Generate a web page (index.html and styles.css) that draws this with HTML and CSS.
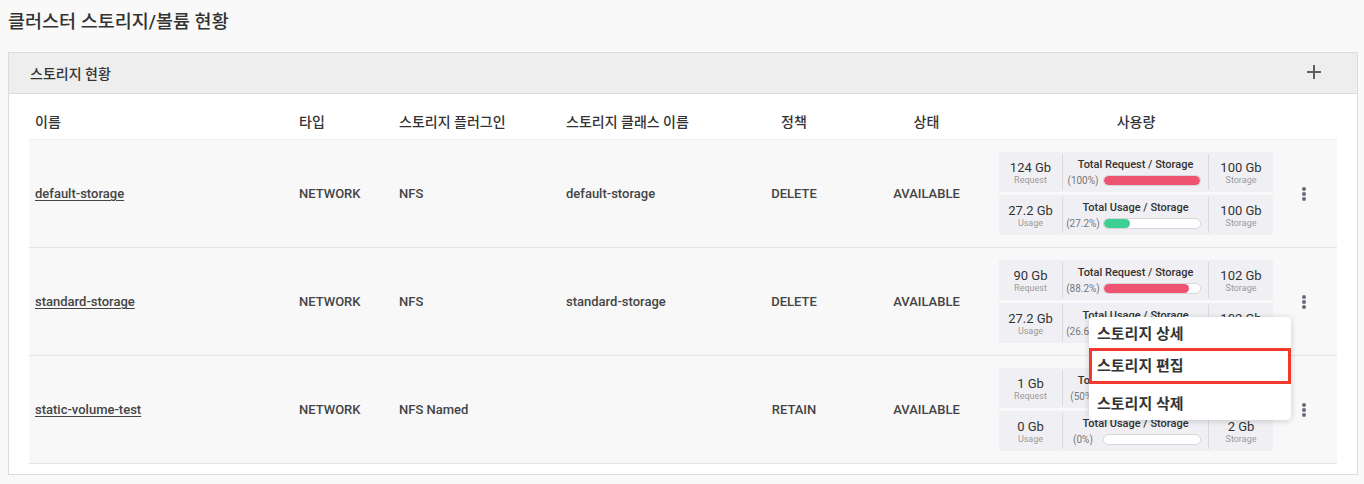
FILE: index.html
```html
<!DOCTYPE html>
<html lang="ko">
<head>
<meta charset="utf-8">
<link rel="stylesheet" href="styles.css">
</head>
<body>
<h1 class="page-title">클러스터 스토리지/볼륨 현황</h1>
<section class="panel">
  <div class="panel-head">
    <span class="panel-title">스토리지 현황</span>
    <svg class="plus" width="16" height="16" viewBox="0 0 16 16"><path d="M8 1v14M1 8h14" stroke="#606060" stroke-width="2" fill="none"/></svg>
  </div>
  <div class="panel-body">
    <div class="grid head">
      <div class="c">이름</div>
      <div class="c">타입</div>
      <div class="c">스토리지 플러그인</div>
      <div class="c">스토리지 클래스 이름</div>
      <div class="c center">정책</div>
      <div class="c center">상태</div>
      <div class="c center">사용량</div>
      <div class="c"></div>
    </div>

    <div class="grid row">
      <div class="c"><a class="name">default-storage</a></div>
      <div class="c">NETWORK</div>
      <div class="c">NFS</div>
      <div class="c">default-storage</div>
      <div class="c center">DELETE</div>
      <div class="c center">AVAILABLE</div>
      <div class="c usage">
        <div class="ublock">
          <div class="val"><span class="num">124 Gb</span><span class="lbl">Request</span></div>
          <div class="mid"><span class="mt">Total Request / Storage</span><div class="barrow"><span class="pct">(100%)</span><span class="bar"><span class="fill red" style="width:100%"></span></span></div></div>
          <div class="val"><span class="num">100 Gb</span><span class="lbl">Storage</span></div>
        </div>
        <div class="ublock">
          <div class="val"><span class="num">27.2 Gb</span><span class="lbl">Usage</span></div>
          <div class="mid"><span class="mt">Total Usage / Storage</span><div class="barrow"><span class="pct">(27.2%)</span><span class="bar"><span class="fill green" style="width:27.2%"></span></span></div></div>
          <div class="val"><span class="num">100 Gb</span><span class="lbl">Storage</span></div>
        </div>
      </div>
      <div class="c act"><svg class="kebab" width="6" height="16" viewBox="0 0 6 16"><circle cx="3" cy="3" r="2"/><circle cx="3" cy="8" r="2"/><circle cx="3" cy="13" r="2"/></svg></div>
    </div>

    <div class="grid row">
      <div class="c"><a class="name">standard-storage</a></div>
      <div class="c">NETWORK</div>
      <div class="c">NFS</div>
      <div class="c">standard-storage</div>
      <div class="c center">DELETE</div>
      <div class="c center">AVAILABLE</div>
      <div class="c usage">
        <div class="ublock">
          <div class="val"><span class="num">90 Gb</span><span class="lbl">Request</span></div>
          <div class="mid"><span class="mt">Total Request / Storage</span><div class="barrow"><span class="pct">(88.2%)</span><span class="bar"><span class="fill red" style="width:88.2%"></span></span></div></div>
          <div class="val"><span class="num">102 Gb</span><span class="lbl">Storage</span></div>
        </div>
        <div class="ublock">
          <div class="val"><span class="num">27.2 Gb</span><span class="lbl">Usage</span></div>
          <div class="mid"><span class="mt">Total Usage / Storage</span><div class="barrow"><span class="pct">(26.6%)</span><span class="bar"><span class="fill green" style="width:26.6%"></span></span></div></div>
          <div class="val"><span class="num">102 Gb</span><span class="lbl">Storage</span></div>
        </div>
      </div>
      <div class="c act">
        <svg class="kebab" width="6" height="16" viewBox="0 0 6 16"><circle cx="3" cy="3" r="2"/><circle cx="3" cy="8" r="2"/><circle cx="3" cy="13" r="2"/></svg>
        <ul class="menu">
          <li class="mi first">스토리지 상세</li>
          <li class="mi hl">스토리지 편집</li>
          <li class="mi last">스토리지 삭제</li>
        </ul>
      </div>
    </div>

    <div class="grid row">
      <div class="c"><a class="name">static-volume-test</a></div>
      <div class="c">NETWORK</div>
      <div class="c">NFS Named</div>
      <div class="c"></div>
      <div class="c center">RETAIN</div>
      <div class="c center">AVAILABLE</div>
      <div class="c usage">
        <div class="ublock">
          <div class="val"><span class="num">1 Gb</span><span class="lbl">Request</span></div>
          <div class="mid"><span class="mt">Total Request / Storage</span><div class="barrow"><span class="pct">(50%)</span><span class="bar"><span class="fill red" style="width:50%"></span></span></div></div>
          <div class="val"><span class="num">2 Gb</span><span class="lbl">Storage</span></div>
        </div>
        <div class="ublock">
          <div class="val"><span class="num">0 Gb</span><span class="lbl">Usage</span></div>
          <div class="mid"><span class="mt">Total Usage / Storage</span><div class="barrow"><span class="pct">(0%)</span><span class="bar"><span class="fill green" style="width:0%"></span></span></div></div>
          <div class="val"><span class="num">2 Gb</span><span class="lbl">Storage</span></div>
        </div>
      </div>
      <div class="c act"><svg class="kebab" width="6" height="16" viewBox="0 0 6 16"><circle cx="3" cy="3" r="2"/><circle cx="3" cy="8" r="2"/><circle cx="3" cy="13" r="2"/></svg></div>
    </div>
  </div>
</section>
</body>
</html>
```

FILE: styles.css
```css
* { box-sizing: border-box; }
html, body { margin: 0; padding: 0; }
body {
  background: #f9f9f9;
  font-family: "Roboto", "Noto Sans CJK KR", sans-serif;
  color: #333;
  width: 1364px;
  height: 484px;
  overflow: hidden;
}
.page-title {
  margin: 0;
  padding: 10px 0 0 8px;
  height: 52px;
  font-size: 18.5px;
  font-weight: 500;
  line-height: 24px;
  color: #333;
}
.panel {
  margin: 0 6px 0 8px;
  border: 1px solid #dcdcdc;
  background: #fff;
}
.panel-head {
  height: 41px;
  background: #eeeeee;
  border-bottom: 1px solid #dcdcdc;
  display: flex;
  align-items: center;
  justify-content: space-between;
  padding: 0 35px 0 21px;
}
.panel-title { font-size: 14px; font-weight: 500; color: #333; }
.plus { display: block; margin-top: -2px; }
.panel-body { padding: 0 20px 10px; }
.grid {
  display: grid;
  grid-template-columns: 264px 100px 167px 174px 120px 145px 274px 63px;
  align-items: center;
}
.c { padding-left: 6px; font-size: 13px; font-weight: 500; color: #444; }
.c.center { text-align: center; padding-left: 0; }
.head {
  height: 46px;
  padding-top: 8px;
  border-bottom: 1px solid #efefef;
}
.head .c { font-size: 14px; color: #333; }
.row {
  height: 108px;
  background: #f8f8f8;
  border-bottom: 1px solid #e3e3e3;
}
.name { color: #444; text-decoration: underline; text-underline-offset: 2px; }
.usage { padding-left: 0; display: flex; flex-direction: column; gap: 3px; }
.ublock {
  display: grid;
  grid-template-columns: 63px 147px 64px;
  height: 40px;
  background: #f0f0f4;
}
.val { display: flex; flex-direction: column; align-items: center; justify-content: center; padding-top: 1px; }
.num { font-size: 13px; font-weight: 400; color: #333; line-height: 15px; }
.lbl { font-size: 9px; font-weight: 400; color: #9a9a9a; line-height: 11px; }
.mid {
  margin: 2px 0;
  border-left: 1px solid #dadade;
  border-right: 1px solid #dadade;
  display: flex;
  flex-direction: column;
  align-items: center;
  justify-content: center;
}
.mt { font-size: 11px; font-weight: 500; color: #333; line-height: 14px; margin-top: -1px; }
.barrow { display: flex; align-items: center; width: 100%; margin-top: 3px; }
.pct { width: 40px; text-align: center; font-size: 10px; font-weight: 400; color: #777; }
.bar {
  width: 98px;
  height: 11px;
  border: 1px solid #d6d6db;
  border-radius: 5px;
  background: #fff;
  overflow: hidden;
  display: block;
}
.fill { display: block; height: 100%; border-radius: 5px; }
.red { background: #ee5470; }
.green { background: #3ecf95; }
.act { padding-left: 28px; position: relative; height: 100%; display: flex; align-items: center; }
.kebab { fill: #666c75; display: block; }
.menu {
  position: absolute;
  top: 69px;
  right: 45px;
  width: 202px;
  margin: 0;
  padding: 0;
  list-style: none;
  background: #fff;
  border-radius: 4px;
  box-shadow: 0 1px 6px rgba(0,0,0,0.18);
  z-index: 5;
}
.mi {
  display: flex;
  align-items: center;
  padding-left: 8px;
  font-size: 15px;
  font-weight: 700;
  color: #333;
  height: 34px;
}
.mi.first { height: 31px; }
.mi.hl { height: 36px; border: 3px solid #f03a2b; padding-left: 5px; padding-bottom: 4px; }
.mi.last { height: 36px; }
```
